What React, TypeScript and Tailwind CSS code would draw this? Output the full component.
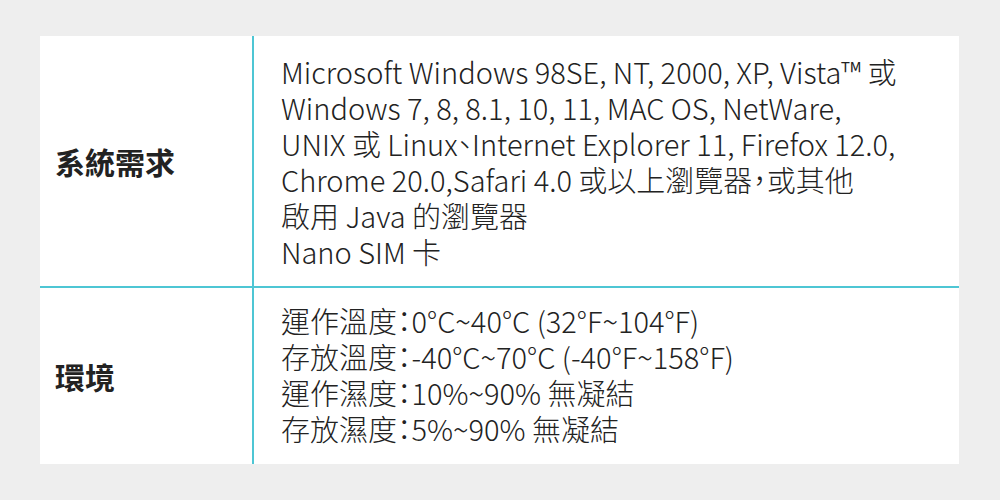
export default function App() {
  const font = { fontFamily: '"Noto Sans CJK TC", "Noto Sans", sans-serif' };
  return (
    <div className="w-[1000px] h-[500px] bg-[#eeeeee] pt-[36px] pl-[40px]" style={font}>
      <div className="w-[919px] bg-white text-[#222222]">
        <div className="flex border-b-2 border-[#4ec6d4]">
          <div className="w-[212px] shrink-0 flex items-center pl-[15px] text-[30px] font-bold">系統需求</div>
          <div className="border-l-2 border-[#4ec6d4] pl-[27px] py-[17px] text-[29px] leading-[36px] font-light [font-feature-settings:'halt'] whitespace-nowrap">
            <div>Microsoft Windows 98SE, NT, 2000, XP, Vista™ 或</div>
            <div>Windows 7, 8, 8.1, 10, 11, MAC OS, NetWare,</div>
            <div>UNIX 或 Linux、Internet Explorer 11, Firefox 12.0,</div>
            <div>Chrome 20.0,Safari 4.0 或以上瀏覽器，或其他</div>
            <div>啟用 Java 的瀏覽器</div>
            <div>Nano SIM 卡</div>
          </div>
        </div>
        <div className="flex">
          <div className="w-[212px] shrink-0 flex items-center pl-[15px] text-[30px] font-bold">環境</div>
          <div className="border-l-2 border-[#4ec6d4] pl-[27px] pt-[14px] pb-[18px] text-[29px] leading-[36px] font-light [font-feature-settings:'halt'] whitespace-nowrap">
            <div>運作溫度：0°C~40°C (32°F~104°F)</div>
            <div>存放溫度：-40°C~70°C (-40°F~158°F)</div>
            <div>運作濕度：10%~90% 無凝結</div>
            <div>存放濕度：5%~90% 無凝結</div>
          </div>
        </div>
      </div>
    </div>
  );
}
